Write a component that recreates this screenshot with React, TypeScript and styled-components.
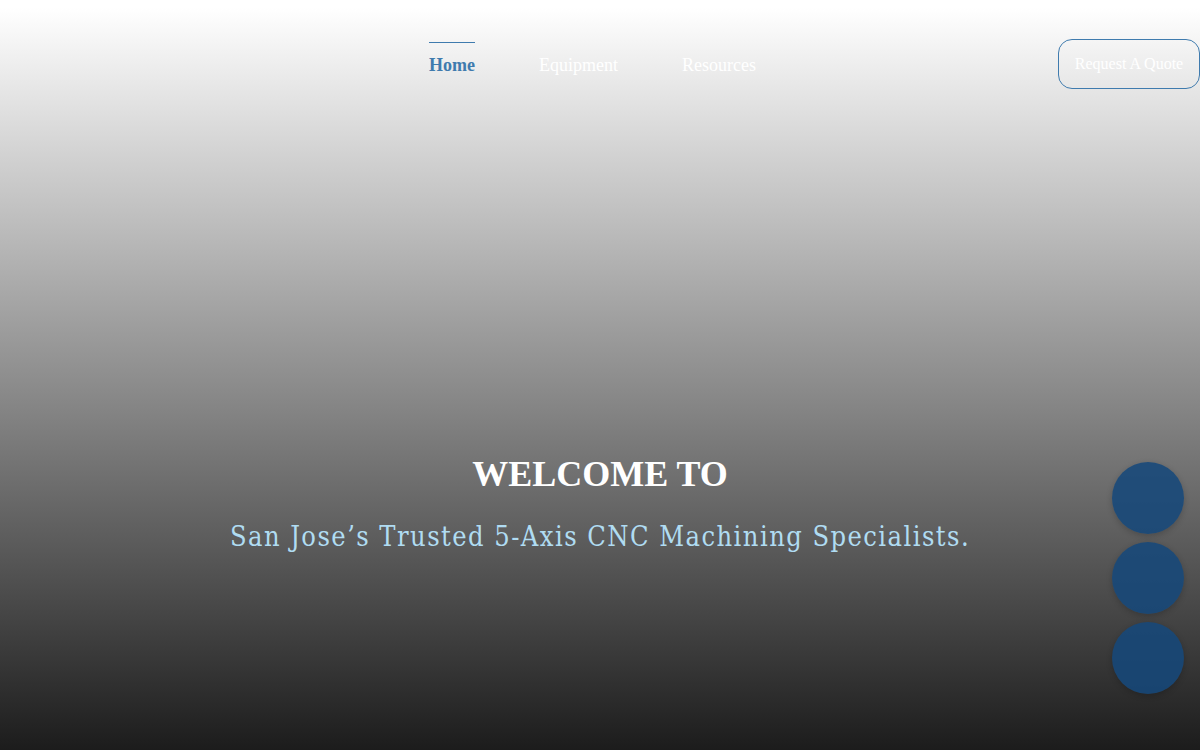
import React from 'react';
import styled, { createGlobalStyle } from 'styled-components';

const GlobalStyle = createGlobalStyle`
  html, body {
    margin: 0;
    padding: 0;
  }
  body {
    font-family: 'Liberation Serif', 'Times New Roman', serif;
    overflow: hidden;
  }
`;

// 화면 전체를 덮는 히어로 영역
const Hero = styled.section`
  width: 1200px;
  height: 750px;
  display: flex;
  flex-direction: column;
  background: linear-gradient(180deg, #ffffff 0%, #ffffff 1%, #1c1c1c 100%);
`;

const Header = styled.header`
  height: 128px;
  display: grid;
  grid-template-columns: 1fr auto 1fr;
  align-items: start;
  padding-top: 39px;
  box-sizing: border-box;
`;

const Menu = styled.nav`
  grid-column: 2;
  display: flex;
  gap: 64px;
  margin-right: 15px;
  padding-top: 3px;
`;

const MenuItem = styled.a<{ $active?: boolean }>`
  font-size: 18px;
  line-height: 1;
  padding-top: 13px;
  text-decoration: none;
  font-weight: ${({ $active }) => ($active ? 700 : 400)};
  color: ${({ $active }) => ($active ? '#3f7bae' : '#ffffff')};
  border-top: 1px solid ${({ $active }) => ($active ? '#3f7bae' : 'transparent')};
  cursor: pointer;
`;

const QuoteButton = styled.button`
  grid-column: 3;
  justify-self: end;
  height: 50px;
  width: 142px;
  border: 1px solid #3f7bae;
  border-radius: 14px;
  background: transparent;
  color: #ffffff;
  font-family: 'Liberation Serif', 'Times New Roman', serif;
  font-size: 16px;
  padding: 0;
  cursor: pointer;
`;

const Body = styled.div`
  flex: 1;
  display: flex;
  flex-direction: column;
  align-items: center;
  padding-top: 324px;
`;

const Title = styled.h1`
  margin: 0;
  font-size: 36px;
  font-weight: 700;
  color: #ffffff;
  line-height: 44px;
`;

const Subtitle = styled.p`
  margin: 23px 0 0;
  font-family: 'DejaVu Serif', 'Liberation Serif', serif;
  font-size: 27px;
  letter-spacing: 1.45px;
  color: #b0dcf2;
  line-height: 36px;
  font-stretch: condensed;
`;

const FloatStack = styled.div`
  position: absolute;
  right: 16px;
  top: 462px;
  display: flex;
  flex-direction: column;
  gap: 8px;
`;

const FloatButton = styled.button`
  width: 72px;
  height: 72px;
  border-radius: 50%;
  border: none;
  background: rgba(22, 72, 122, 0.88);
  box-shadow: 0 2px 6px rgba(0, 0, 0, 0.2);
  cursor: pointer;
`;

const App: React.FC = () => {
  return (
    <React.Fragment>
      <GlobalStyle />
      <Hero>
        <Header>
          <Menu>
            <MenuItem $active>Home</MenuItem>
            <MenuItem>Equipment</MenuItem>
            <MenuItem>Resources</MenuItem>
          </Menu>
          <QuoteButton>Request A Quote</QuoteButton>
        </Header>
        <Body>
          <Title>WELCOME TO</Title>
          <Subtitle>San Jose’s Trusted 5-Axis CNC Machining Specialists.</Subtitle>
        </Body>
      </Hero>
      <FloatStack>
        <FloatButton aria-label="contact" />
        <FloatButton aria-label="phone" />
        <FloatButton aria-label="mail" />
      </FloatStack>
    </React.Fragment>
  );
};

export default App;
